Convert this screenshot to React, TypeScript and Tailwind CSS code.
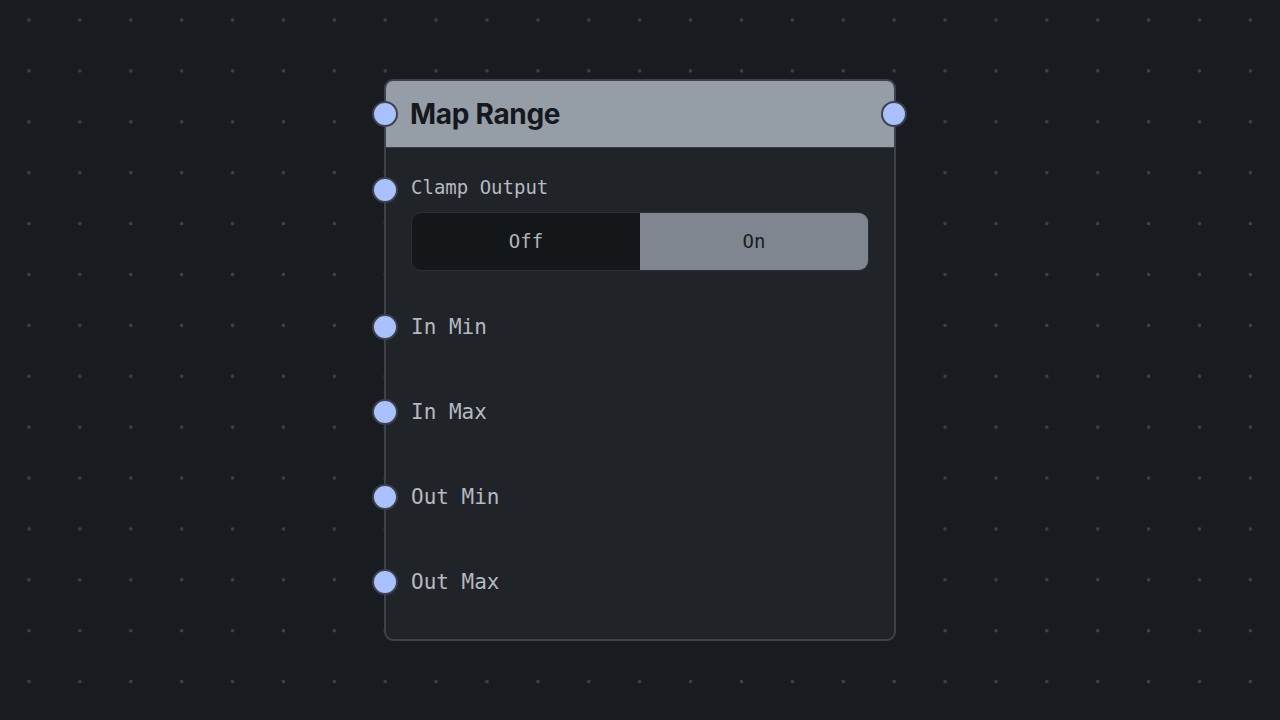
import React, { useState } from "react";

// Inputs listed under the toggle, one socket each
const INPUTS = ["In Min", "In Max", "Out Min", "Out Max"];

function Socket({ className = "" }: { className?: string }) {
  return (
    <span
      className={
        "absolute w-[26px] h-[26px] rounded-full bg-[#a9c1ff] border-2 border-[#3d4249] " +
        className
      }
    />
  );
}

export default function App() {
  const [clamp, setClamp] = useState(true);

  return (
    <div
      className="w-full h-screen bg-[#181b1f] flex items-start justify-center overflow-hidden"
      style={{
        backgroundImage:
          "radial-gradient(circle, #3c4046 1.7px, transparent 2.1px)",
        backgroundSize: "50.9px 50.9px",
        backgroundPosition: "3.55px -5.45px",
      }}
    >
      <div className="mt-[79px] w-[512px] h-[562px] bg-[#202327] border-2 border-[#3e4248] rounded-[9px] flex flex-col">
        {/* header */}
        <div className="relative h-[67px] bg-[#959da6] rounded-t-[7px] border-b border-[#3a3e44] flex items-center pl-[24px]">
          <Socket className="left-[-14px] top-[20px]" />
          <span className="text-[28px] font-bold text-[#15181c] tracking-[-0.3px] font-['Inter',sans-serif] leading-none">
            Map Range
          </span>
          <Socket className="right-[-13px] top-[20px]" />
        </div>

        {/* body */}
        <div className="flex flex-col pt-[27px] font-['DejaVu_Sans_Mono',monospace]">
          <div className="relative h-[24px] flex items-center pl-[25px]">
            <Socket className="left-[-14px] top-[2px]" />
            <span className="text-[19px] text-[#b4bac1] leading-none">Clamp Output</span>
          </div>
          <div className="mt-[13px] ml-[25px] mr-[25px] h-[59px] flex rounded-[10px] border border-[#2c3036] overflow-hidden">
            <button
              onClick={() => setClamp(false)}
              className={
                "flex-1 flex items-center justify-center text-[19px] " +
                (clamp ? "bg-[#141719] text-[#b0b6bd]" : "bg-[#80868f] text-[#1a1d21]")
              }
            >
              Off
            </button>
            <button
              onClick={() => setClamp(true)}
              className={
                "flex-1 flex items-center justify-center text-[19px] " +
                (clamp ? "bg-[#80868f] text-[#1a1d21]" : "bg-[#141719] text-[#b0b6bd]")
              }
            >
              On
            </button>
          </div>
          <div className="mt-[14px] flex flex-col">
            {INPUTS.map((name) => (
              <div key={name} className="relative h-[85px] flex items-center pl-[25px]">
                <Socket className="left-[-14px] top-[29px]" />
                <span className="text-[21px] text-[#b4bac1] leading-none">{name}</span>
              </div>
            ))}
          </div>
        </div>
      </div>
    </div>
  );
}
